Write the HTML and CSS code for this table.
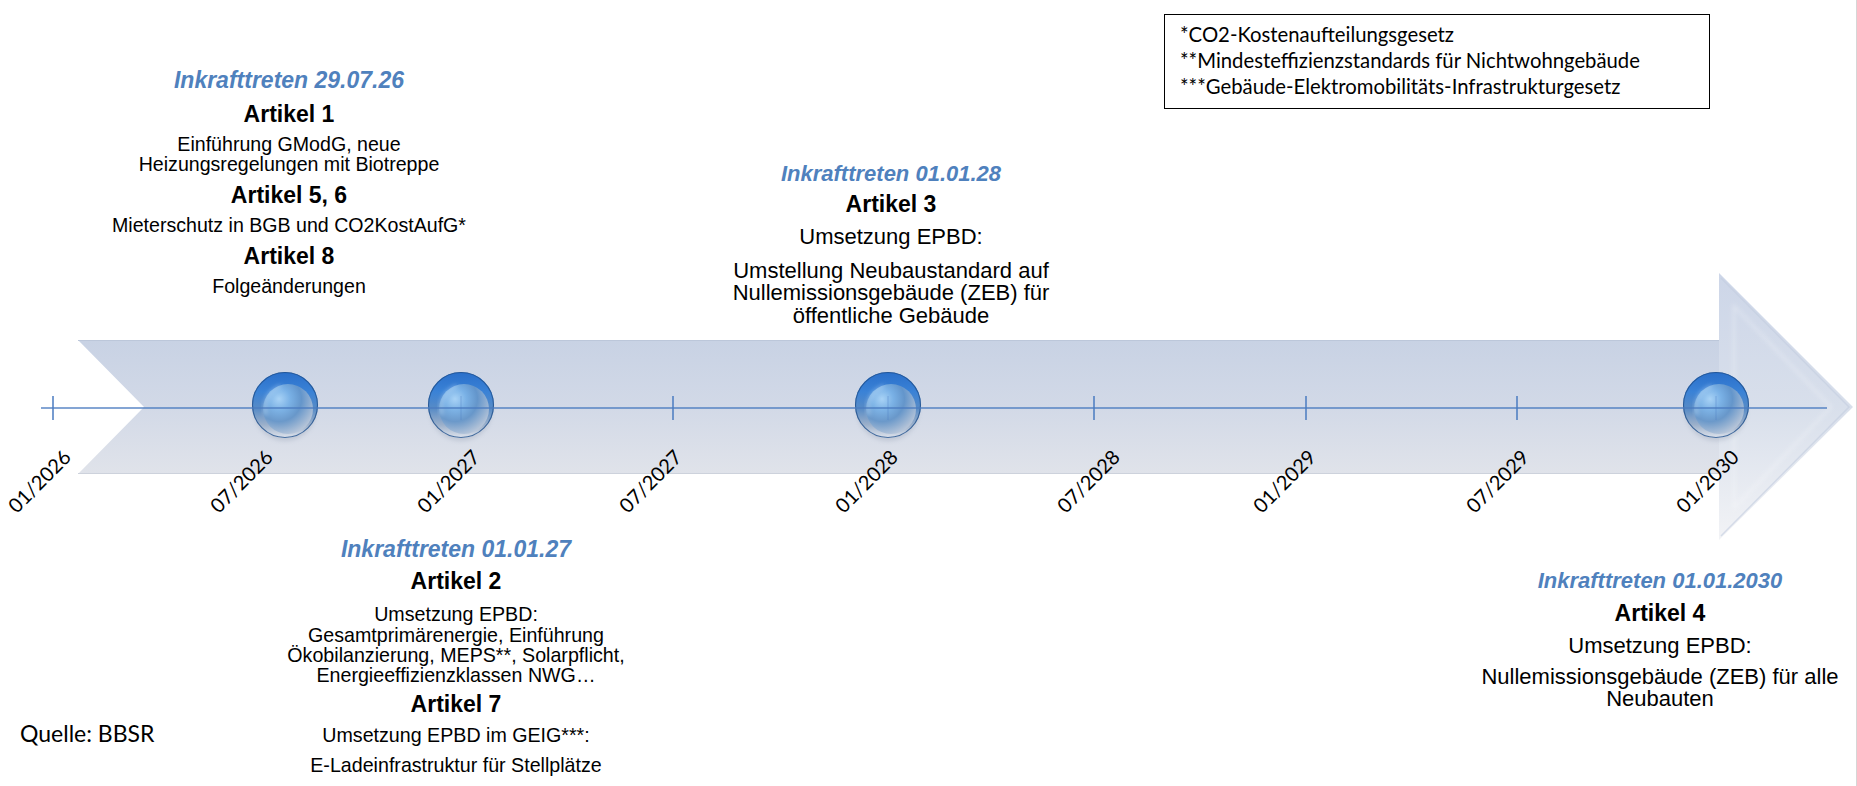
FILE: index.html
```html
<!DOCTYPE html>
<html lang="de">
<head>
<meta charset="utf-8">
<title>Zeitplan Inkrafttreten</title>
<link rel="stylesheet" href="styles.css">
</head>
<body>
<div class="canvas">
  <svg class="timeline" width="1857" height="786" viewBox="0 0 1857 786" xmlns="http://www.w3.org/2000/svg">
    <defs>
      <linearGradient id="bodyGrad" x1="0" y1="340" x2="0" y2="474" gradientUnits="userSpaceOnUse">
        <stop offset="0" stop-color="#c8d2e4"/>
        <stop offset="0.5" stop-color="#d2d9e7"/>
        <stop offset="1" stop-color="#e0e3ea"/>
      </linearGradient>
      <linearGradient id="headGrad" x1="0" y1="273" x2="0" y2="540" gradientUnits="userSpaceOnUse">
        <stop offset="0" stop-color="#cdd6e8"/>
        <stop offset="0.5" stop-color="#d8dfeb"/>
        <stop offset="1" stop-color="#f2f3f6"/>
      </linearGradient>
      <linearGradient id="marbleOuter" x1="0" y1="0" x2="0" y2="1">
        <stop offset="0" stop-color="#2a6fca"/>
        <stop offset="0.3" stop-color="#3a82d6"/>
        <stop offset="0.55" stop-color="#578bc6"/>
        <stop offset="0.8" stop-color="#9cb0ca"/>
        <stop offset="1" stop-color="#dfe4ed"/>
      </linearGradient>
      <radialGradient id="marbleInner" cx="0.32" cy="0.3" r="0.75">
        <stop offset="0" stop-color="#b3dbfa"/>
        <stop offset="0.3" stop-color="#80b6e8"/>
        <stop offset="0.6" stop-color="#6797ca"/>
        <stop offset="1" stop-color="#b6c5d9"/>
      </radialGradient>
      <filter id="soft" x="-20%" y="-20%" width="140%" height="140%">
        <feGaussianBlur stdDeviation="2"/>
      </filter>
      <g id="marble">
        <ellipse cx="0" cy="6" rx="31" ry="30" fill="#7d8aa0" opacity="0.25" filter="url(#soft)"/>
        <circle cx="0" cy="0" r="33" fill="url(#marbleOuter)"/>
        <circle cx="0" cy="0" r="32.5" fill="none" stroke="#21508c" stroke-width="1.1" opacity="0.8"/>
        <circle cx="3" cy="4" r="25" fill="url(#marbleInner)" opacity="0.9"/>
        <path d="M-19 10 A23 23 0 0 1 -4 -19" fill="none" stroke="#d6ecff" stroke-width="2.5" opacity="0.5" filter="url(#soft)"/>
      </g>
    </defs>

    <polygon points="78,340 1719,340 1719,474 78,474 144,407" fill="url(#bodyGrad)"/>
    <line x1="78" y1="340.5" x2="1719" y2="340.5" stroke="#bcc7da" stroke-width="1"/>
    <line x1="78" y1="473.5" x2="1719" y2="473.5" stroke="#cdd2dc" stroke-width="1"/>
    <polygon points="1719,273 1853,407 1719,540" fill="url(#headGrad)"/>
    <polygon points="1734,306 1831,407 1734,508" fill="none" stroke="#ffffff" stroke-width="2.5" opacity="0.3" filter="url(#soft)"/>
    <polyline points="1721,278 1849,407 1721,536" fill="none" stroke="#c3cde0" stroke-width="1.5" opacity="0.6"/>

    <use href="#marble" x="285" y="405"/>
    <use href="#marble" x="461" y="405"/>
    <use href="#marble" x="888" y="405"/>
    <use href="#marble" x="1716" y="405"/>

    <line x1="41" y1="408" x2="1827" y2="408" stroke="#4a7bc1" stroke-width="1.6" opacity="0.9"/>
    <g stroke="#4a7bc1" stroke-width="1.5">
      <line x1="53" y1="396" x2="53" y2="420"/>
      <line x1="673" y1="396" x2="673" y2="420"/>
      <line x1="1094" y1="396" x2="1094" y2="420"/>
      <line x1="1306" y1="396" x2="1306" y2="420"/>
      <line x1="1517" y1="396" x2="1517" y2="420"/>
    </g>
    <g stroke="#4a7bc1" stroke-width="1" opacity="0.4">
      <line x1="461" y1="396" x2="461" y2="420"/>
      <line x1="888" y1="396" x2="888" y2="420"/>
      <line x1="1716" y1="396" x2="1716" y2="420"/>
    </g>
  </svg>

  <div class="note">
    <p>*CO2-Kostenaufteilungsgesetz</p>
    <p>**Mindesteffizienzstandards für Nichtwohngebäude</p>
    <p>***Gebäude-Elektromobilitäts-Infrastrukturgesetz</p>
  </div>

  <div class="block b1">
    <p class="when">Inkrafttreten 29.07.26</p>
    <p class="art">Artikel 1</p>
    <p class="txt">Einführung GModG, neue<br>Heizungsregelungen mit Biotreppe</p>
    <p class="art">Artikel 5, 6</p>
    <p class="txt">Mieterschutz in BGB und CO2KostAufG*</p>
    <p class="art">Artikel 8</p>
    <p class="txt">Folgeänderungen</p>
  </div>

  <div class="block b3">
    <p class="when">Inkrafttreten 01.01.28</p>
    <p class="art">Artikel 3</p>
    <p class="txt t1">Umsetzung EPBD:</p>
    <p class="txt t2">Umstellung Neubaustandard auf<br>Nullemissionsgebäude (ZEB) für<br>öffentliche Gebäude</p>
  </div>

  <div class="block b2">
    <p class="when">Inkrafttreten 01.01.27</p>
    <p class="art a1">Artikel 2</p>
    <p class="txt t1">Umsetzung EPBD:<br>Gesamtprimärenergie, Einführung<br>Ökobilanzierung, MEPS**, Solarpflicht,<br>Energieeffizienzklassen NWG…</p>
    <p class="art a2">Artikel 7</p>
    <p class="txt t2">Umsetzung EPBD im GEIG***:</p>
    <p class="txt t3">E-Ladeinfrastruktur für Stellplätze</p>
  </div>

  <div class="block b4">
    <p class="when">Inkrafttreten 01.01.2030</p>
    <p class="art">Artikel 4</p>
    <p class="txt t1">Umsetzung EPBD:</p>
    <p class="txt t2">Nullemissionsgebäude (ZEB) für alle<br>Neubauten</p>
  </div>

  <p class="source">Quelle: BBSR</p>

  <div class="date d1"><span>01/2026</span></div>
  <div class="date d2"><span>07/2026</span></div>
  <div class="date d3"><span>01/2027</span></div>
  <div class="date d4"><span>07/2027</span></div>
  <div class="date d5"><span>01/2028</span></div>
  <div class="date d6"><span>07/2028</span></div>
  <div class="date d7"><span>01/2029</span></div>
  <div class="date d8"><span>07/2029</span></div>
  <div class="date d9"><span>01/2030</span></div>
</div>
</body>
</html>
```

FILE: styles.css
```css
html, body {
  margin: 0;
  padding: 0;
  background: #ffffff;
}

.canvas {
  position: relative;
  width: 1856px;
  height: 786px;
  overflow: hidden;
  background: #ffffff;
  border-right: 1px solid #d6d6d6;
}

.canvas p {
  margin: 0;
}

.timeline {
  position: absolute;
  left: 0;
  top: 0;
  display: block;
}

/* footnote legend */
.note {
  position: absolute;
  left: 1164px;
  top: 14px;
  width: 546px;
  height: 95px;
  box-sizing: border-box;
  border: 1.5px solid #000000;
  padding: 6px 0 0 15px;
  font-family: Lato, "Open Sans", sans-serif;
  font-size: 20.3px;
  line-height: 26px;
  color: #000000;
  white-space: nowrap;
}

/* text blocks anchored to the timeline dates */
.block {
  position: absolute;
  transform: translateX(-50%);
  display: flex;
  flex-direction: column;
  align-items: center;
  text-align: center;
  font-family: "Liberation Sans", Arial, sans-serif;
  color: #000000;
  white-space: nowrap;
}

.when {
  color: #4f81bd;
  font-weight: bold;
  font-style: italic;
  font-size: 23px;
  line-height: 26px;
}

.art {
  font-weight: bold;
  font-size: 23px;
  line-height: 26px;
}

.txt {
  font-size: 19.6px;
  line-height: 20px;
}

.b1 {
  left: 289px;
  top: 67px;
  gap: 7.5px;
}

.b3 {
  left: 891px;
  top: 161px;
}
.b3 .when { font-size: 22px; }
.b3 .art { margin-top: 3.6px; }
.b3 .txt { font-size: 22px; line-height: 22.5px; }
.b3 .t1 { margin-top: 9px; }
.b3 .t2 { margin-top: 11.5px; }

.b2 {
  left: 456px;
  top: 536.4px;
}
.b2 .txt { font-size: 19.65px; line-height: 20.2px; }
.b2 .a1 { margin-top: 5.6px; }
.b2 .t1 { margin-top: 10.4px; }
.b2 .a2 { margin-top: 6.3px; }
.b2 .t2 { margin-top: 7.4px; }
.b2 .t3 { margin-top: 9.8px; }

.b4 {
  left: 1660px;
  top: 568px;
}
.b4 .when { font-size: 22px; }
.b4 .art { margin-top: 6px; }
.b4 .txt { font-size: 22px; line-height: 22.5px; }
.b4 .t1 { margin-top: 9.25px; }
.b4 .t2 { margin-top: 8px; }

.source {
  position: absolute;
  left: 20px;
  top: 719px;
  font-family: Lato, "Open Sans", sans-serif;
  font-size: 23px;
  line-height: 28px;
  color: #000000;
  white-space: nowrap;
}

/* rotated axis labels: anchor is the end of the text */
.date {
  position: absolute;
  top: 453px;
  width: 0;
  height: 0;
}

.date span {
  position: absolute;
  right: 0;
  top: -11px;
  line-height: 22px;
  font-family: Lato, "Open Sans", sans-serif;
  font-size: 20px;
  color: #000000;
  white-space: nowrap;
  transform-origin: 100% 50%;
  transform: rotate(-45deg);
}

.d1 { left: 67px; }
.d2 { left: 269px; }
.d3 { left: 476px; }
.d4 { left: 678px; }
.d5 { left: 894px; }
.d6 { left: 1116px; }
.d7 { left: 1312px; }
.d8 { left: 1525px; }
.d9 { left: 1735px; }
```
